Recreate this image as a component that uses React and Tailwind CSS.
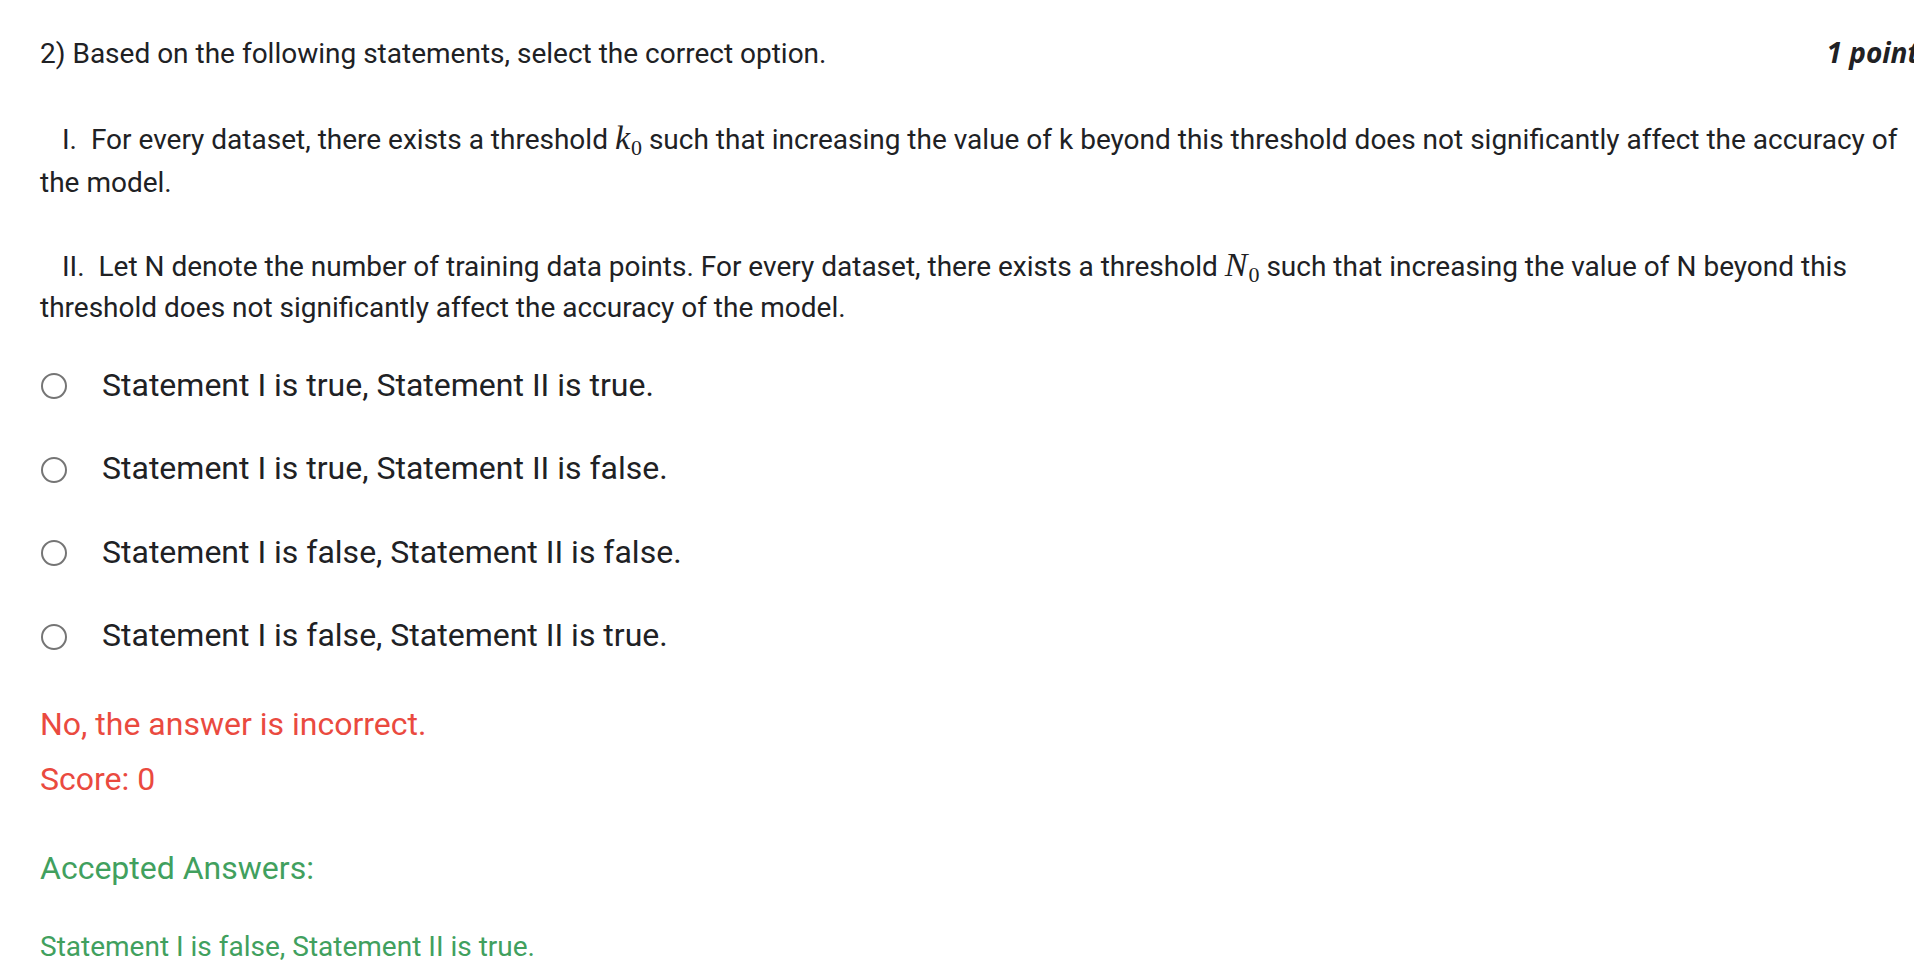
import React from "react";

function MathVar({ v }) {
  return (
    <span className="whitespace-nowrap">
      <span className="font-['Liberation_Serif',serif] italic text-[34px] leading-none">{v}</span>
      <span className="font-['Liberation_Serif',serif] text-[22px] leading-none align-[-6px] ml-[1px]">0</span>
    </span>
  );
}

const options = [
  "Statement I is true, Statement II is true.",
  "Statement I is true, Statement II is false.",
  "Statement I is false, Statement II is false.",
  "Statement I is false, Statement II is true.",
];

export default function App() {
  return (
    <div className="w-[1914px] h-[978px] overflow-hidden bg-white text-[#202124] font-['Roboto',sans-serif]">
      <div className="w-[1919px] pl-[40px] pt-[31px]">
        <div className="flex justify-between items-baseline text-[28px] leading-[42px]">
          <span>2) Based on the following statements, select the correct option.</span>
          <span className="font-['Open_Sans',sans-serif] italic font-bold text-[28px]">1 point</span>
        </div>

        <p className="mt-[43px] text-[28px] leading-[43px] indent-[22px]">
          I.{"\u00a0 "}For every dataset, there exists a threshold <MathVar v="k" /> such that increasing the value of k beyond this threshold does not significantly affect the accuracy of the model.
        </p>

        <p className="mt-[42px] text-[28px] leading-[41px] indent-[22px]">
          II.{"\u00a0 "}Let N denote the number of training data points. For every dataset, there exists a threshold <MathVar v="N" /> such that increasing the value of N beyond this threshold does not significantly affect the accuracy of the model.
        </p>

        <div className="mt-[15px] flex flex-col">
          {options.map((o) => (
            <div key={o} className="flex items-center h-[83.5px]">
              <div className="w-[26px] h-[26px] rounded-full border-2 border-[#757575] ml-[1px] mr-[35px] mt-[3px] shrink-0" />
              <span className="text-[32px] leading-[48px]">{o}</span>
            </div>
          ))}
        </div>

        <div className="mt-[23px] text-[32px] leading-[48px] text-[#ea4a3f]">No, the answer is incorrect.</div>
        <div className="mt-[7px] text-[32px] leading-[48px] text-[#ea4a3f]">Score: 0</div>

        <div className="mt-[41px] text-[32px] leading-[48px] text-[#41a05e]">Accepted Answers:</div>
        <div className="mt-[34px] text-[28px] leading-[42px] text-[#41a05e]">Statement I is false, Statement II is true.</div>
      </div>
    </div>
  );
}
